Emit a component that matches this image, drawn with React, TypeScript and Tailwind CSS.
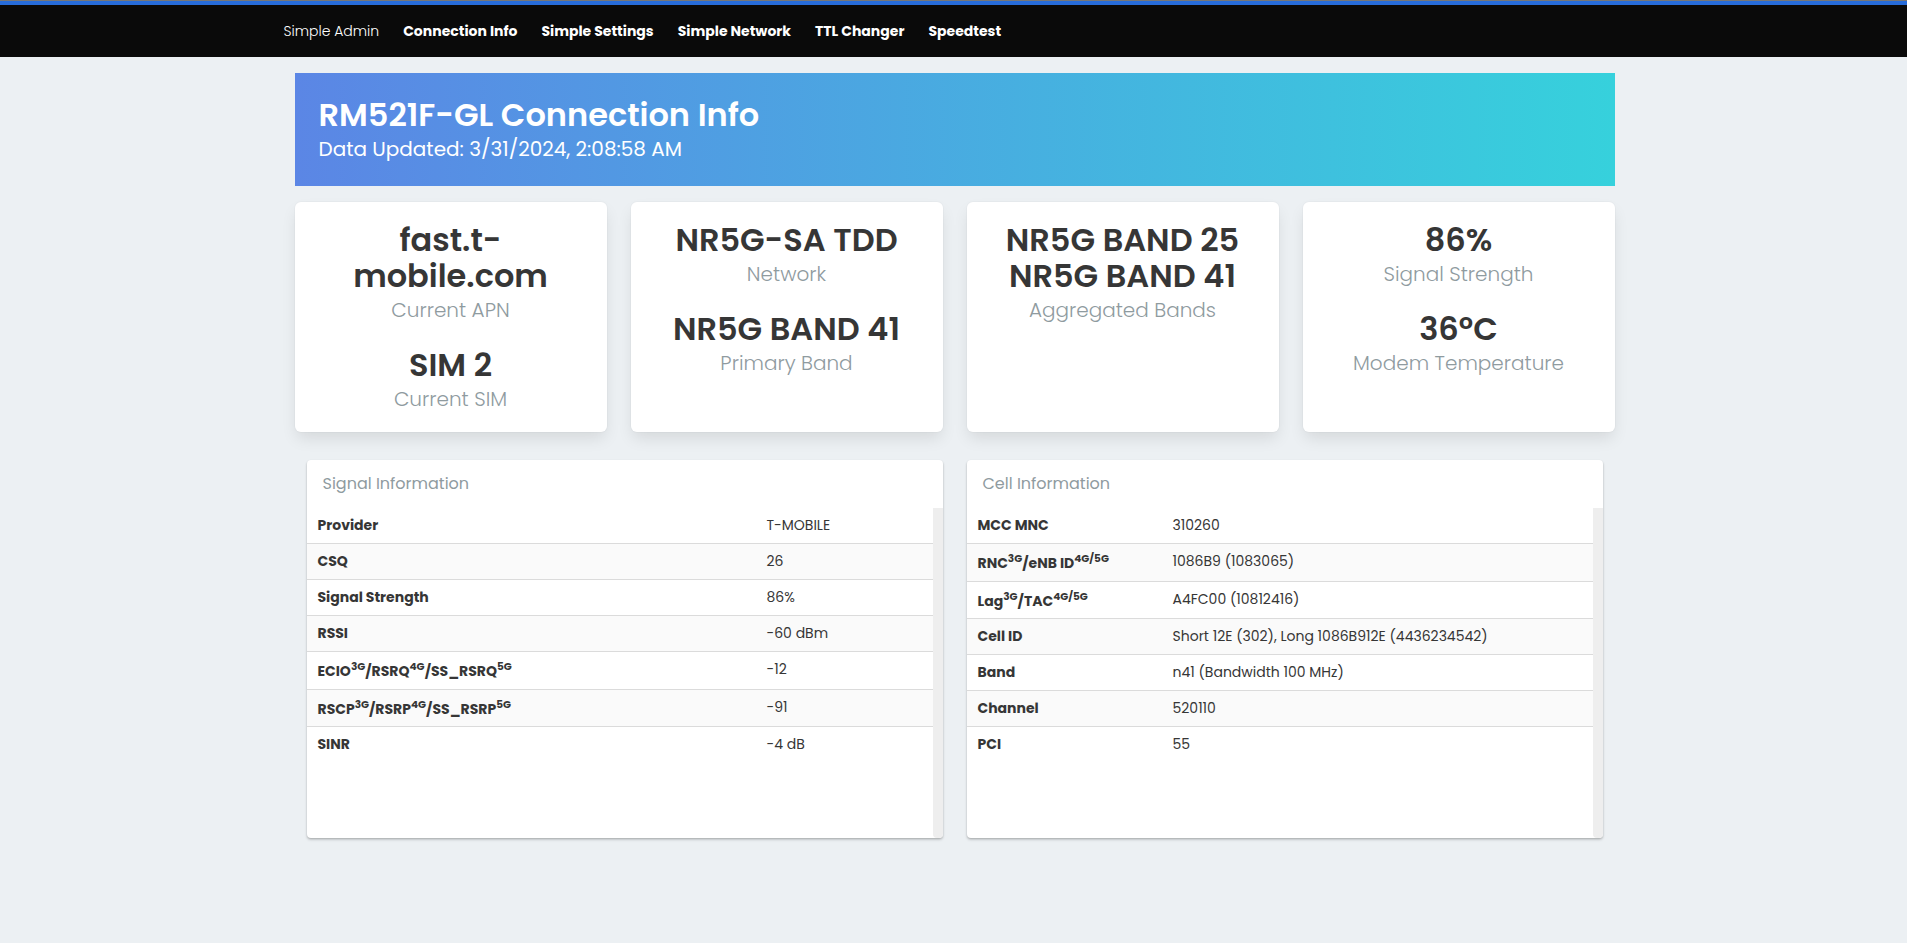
import type { ReactNode } from "react";

const navItems = ["Connection Info", "Simple Settings", "Simple Network", "TTL Changer", "Speedtest"];

type Stat = { value: string; label: string };

const cards: Stat[][] = [
  [
    { value: "fast.t-mobile.com", label: "Current APN" },
    { value: "SIM 2", label: "Current SIM" },
  ],
  [
    { value: "NR5G-SA TDD", label: "Network" },
    { value: "NR5G BAND 41", label: "Primary Band" },
  ],
  [{ value: "NR5G BAND 25 NR5G BAND 41", label: "Aggregated Bands" }],
  [
    { value: "86%", label: "Signal Strength" },
    { value: "36ºC", label: "Modem Temperature" },
  ],
];

type Row = [ReactNode, string];

function Sup({ children }: { children: ReactNode }) {
  return <sup className="static align-super leading-4">{children}</sup>;
}

const signalRows: Row[] = [
  ["Provider", "T-MOBILE"],
  ["CSQ", "26"],
  ["Signal Strength", "86%"],
  ["RSSI", "-60 dBm"],
  [
    <>
      ECIO<Sup>3G</Sup>/RSRQ<Sup>4G</Sup>/SS_RSRQ<Sup>5G</Sup>
    </>,
    "-12",
  ],
  [
    <>
      RSCP<Sup>3G</Sup>/RSRP<Sup>4G</Sup>/SS_RSRP<Sup>5G</Sup>
    </>,
    "-91",
  ],
  ["SINR", "-4 dB"],
];

const cellRows: Row[] = [
  ["MCC MNC", "310260"],
  [
    <>
      RNC<Sup>3G</Sup>/eNB ID<Sup>4G/5G</Sup>
    </>,
    "1086B9 (1083065)",
  ],
  [
    <>
      Lag<Sup>3G</Sup>/TAC<Sup>4G/5G</Sup>
    </>,
    "A4FC00 (10812416)",
  ],
  ["Cell ID", "Short 12E (302), Long 1086B912E (4436234542)"],
  ["Band", "n41 (Bandwidth 100 MHz)"],
  ["Channel", "520110"],
  ["PCI", "55"],
];

function StatCard({ stats }: { stats: Stat[] }) {
  return (
    <article className="flex flex-col gap-6 rounded-md bg-white p-5 text-center shadow-[0_8px_16px_-2px_rgba(10,10,10,0.1),0_0_0_1px_rgba(10,10,10,0.02)]">
      {stats.map((stat) => (
        <div key={stat.label}>
          <p className="text-[32px] leading-9 font-semibold text-[#363636]">{stat.value}</p>
          <p className="mt-1 text-xl leading-[25px] font-light text-[#8f9b9f]">{stat.label}</p>
        </div>
      ))}
    </article>
  );
}

function InfoPanel({ title, rows, labelWidth }: { title: string; rows: Row[]; labelWidth: string }) {
  return (
    <section className="rounded bg-white shadow-[0_2px_3px_rgba(0,0,0,0.13),0_1px_2px_rgba(0,0,0,0.18)]">
      <header className="flex h-12 items-center px-4">
        <h2 className="text-base font-normal text-[#8f9b9f]">{title}</h2>
      </header>
      <div className="flex h-[330px]">
        <div className="min-w-0 flex-1">
          <table className="w-full table-fixed border-collapse text-sm leading-[21px] text-[#363636]">
            <tbody>
              {rows.map(([label, value], i) => (
                <tr key={i} className="border-b border-[#dbdbdb] last:border-b-0 even:bg-[#fafafa]">
                  <th scope="row" className={`${labelWidth} px-[11px] py-[7px] text-left align-top font-bold whitespace-nowrap`}>
                    {label}
                  </th>
                  <td className="px-[11px] py-[7px] align-top font-normal">{value}</td>
                </tr>
              ))}
            </tbody>
          </table>
        </div>
        <div className="w-[10px] rounded-b bg-[#eeeeee]" />
      </div>
    </section>
  );
}

export default function App() {
  return (
    <div className="min-h-screen bg-[#ecf0f3] font-[Poppins,Inter,sans-serif]">
      <div className="h-px bg-[#777777]" />
      <nav className="border-t-4 border-[#276cda] bg-[#0a0a0a] text-white">
        <div className="mx-auto flex h-[52px] max-w-[1344px] items-center text-sm">
          <a href="#" className="pr-3 pl-0.5 font-light">
            Simple Admin
          </a>
          {navItems.map((item) => (
            <a key={item} href="#" className="px-3 font-bold">
              {item}
            </a>
          ))}
        </div>
      </nav>
      <main className="mx-auto max-w-[1344px] pt-4 pr-[11px] pl-[13px]">
        <header className="bg-linear-to-r/srgb from-[#5b86e5] to-[#36d1dc] p-6 text-white">
          <h1 className="text-[32px] leading-9 font-semibold">RM521F-GL Connection Info</h1>
          <p className="mt-1 text-xl leading-[25px]">Data Updated: 3/31/2024, 2:08:58 AM</p>
        </header>
        <div className="mt-4 grid grid-cols-4 gap-6">
          {cards.map((stats, i) => (
            <StatCard key={i} stats={stats} />
          ))}
        </div>
        <div className="mt-7 grid grid-cols-2 gap-6 px-3">
          <InfoPanel title="Signal Information" rows={signalRows} labelWidth="w-[449px]" />
          <InfoPanel title="Cell Information" rows={cellRows} labelWidth="w-[195px]" />
        </div>
      </main>
    </div>
  );
}
